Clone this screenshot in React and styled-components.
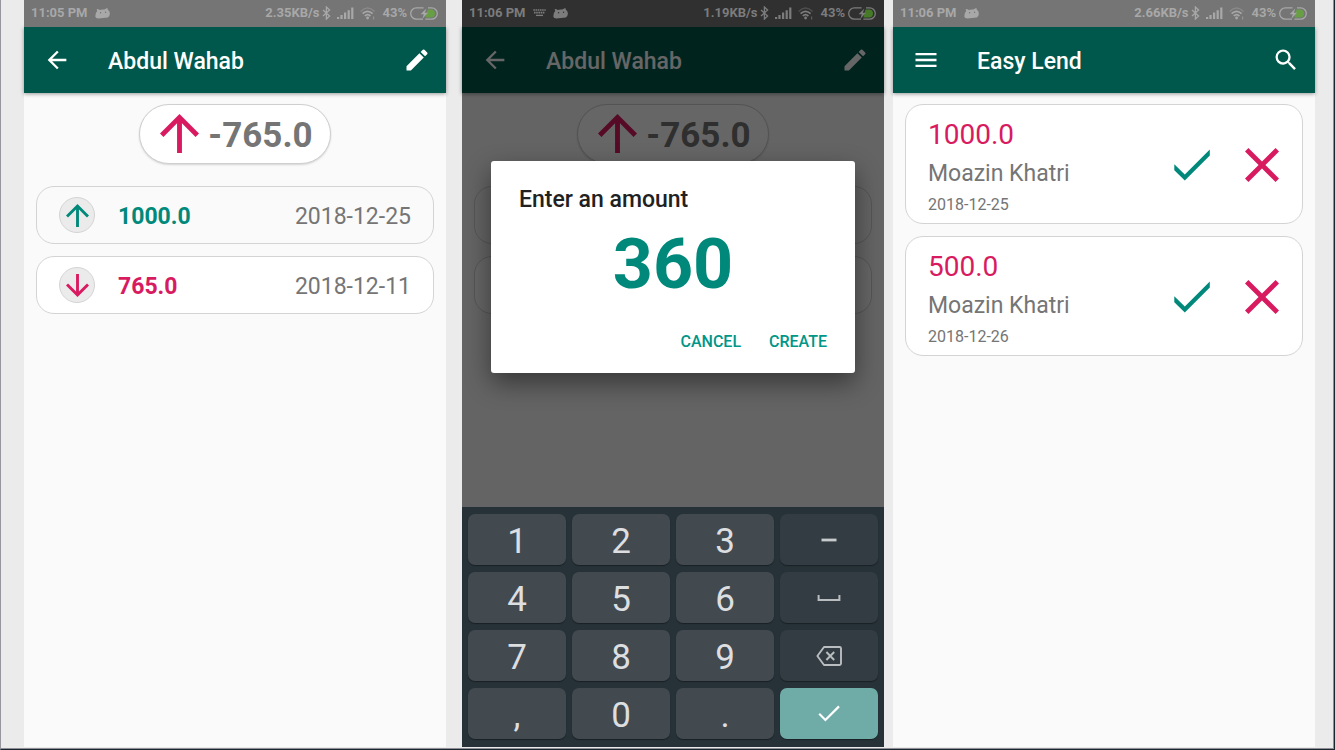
import React from "react";
import styled, { createGlobalStyle, css } from "styled-components";
import { MdArrowBack, MdEdit, MdMenu, MdSearch } from "react-icons/md";

const TEAL = "#00897b";
const PINK = "#d81b60";

const GlobalStyle = createGlobalStyle`
  *, *::before, *::after { box-sizing: border-box; }
  body {
    margin: 0;
    background: #ebebeb;
    font-family: Roboto, "Noto Sans", sans-serif;
    color: #757575;
  }
  h1, h2, p, ul { margin: 0; padding: 0; }
  ul { list-style: none; }
  button { font: inherit; margin: 0; padding: 0; border: 0; background: none; cursor: pointer; }
  svg { display: block; }
`;

const Board = styled.main`
  display: flex;
  min-height: 100vh;
  padding: 0 19px 1px 23px;
  background: #ebebeb;
  border-left: 1px solid #97959d;
  border-right: 1px solid #1b262e;
  border-bottom: 1px solid #1b262e;
  box-shadow: inset -1px -1px 0 #8f8d95;
`;

const Phone = styled.section`
  flex: 1 1 0;
  min-width: 0;
  display: flex;
  flex-direction: column;
  margin-left: ${(p) => p.$gap || 0}px;
  margin-bottom: 1px;
  background: #fafafa;
`;

const Stage = styled.div`
  position: relative;
  flex: 1;
  display: flex;
  flex-direction: column;
`;

const StatusBar = styled.div`
  position: relative;
  z-index: 2;
  display: flex;
  align-items: center;
  justify-content: space-between;
  height: 27px;
  padding: 0 8px 1px 7px;
  font-size: 13px;
  line-height: 16px;
  font-weight: 700;
  white-space: nowrap;
  background: ${(p) => (p.$dim ? "#303030" : "#757575")};
  color: ${(p) => (p.$dim ? "#7c7c7c" : "#a8a8a8")};
`;

const StatusGroup = styled.div`
  display: flex;
  align-items: center;
  gap: ${(p) => p.$gap}px;
`;

const AppBar = styled.header`
  display: flex;
  align-items: center;
  height: 66px;
  padding: 0 15px 0 19px;
  background: #00574b;
  color: #fff;
  box-shadow: 0 1px 4px rgba(0, 0, 0, 0.4);
`;

const AppTitle = styled.h1`
  flex: 1;
  margin-left: 37px;
  padding-top: 4px;
  font-size: 23px;
  line-height: 28px;
  font-weight: 500;
`;

const IconButton = styled.button`
  display: flex;
  color: inherit;
`;

const Content = styled.div`
  display: flex;
  flex-direction: column;
  align-items: center;
  padding: 11px 12px;
`;

const Balance = styled.div`
  display: flex;
  align-items: center;
  gap: 9px;
  height: 60px;
  padding: 0 17px 1px 20px;
  border: 1px solid #cfcfcf;
  border-radius: 30px;
  background: #fff;
  box-shadow: 0 1px 2px rgba(0, 0, 0, 0.15);
`;

const BalanceValue = styled.strong`
  padding-top: 4px;
  font-size: 35px;
  line-height: 42px;
  font-weight: 700;
`;

const Entries = styled.ul`
  display: flex;
  flex-direction: column;
  gap: 12px;
  width: 100%;
  margin-top: ${(p) => p.$top || 0}px;
`;

const surface = css`
  display: flex;
  align-items: center;
  border: 1px solid #d4d4d4;
  border-radius: 18px;
`;

const Entry = styled.li`
  ${surface}
  height: 58px;
  padding: 0 22px;
  background: ${(p) => (p.$plain ? "#fafafa" : "#fff")};

  & > * {
    visibility: ${(p) => (p.$covered ? "hidden" : "visible")};
  }
`;

const Badge = styled.span`
  display: flex;
  align-items: center;
  justify-content: center;
  width: 36px;
  height: 36px;
  border: 1px solid #d4d4d4;
  border-radius: 50%;
  background: #ebebeb;
`;

const entryText = css`
  padding-top: 4px;
  font-size: 23px;
  line-height: 28px;
`;

const EntryAmount = styled.strong`
  ${entryText}
  flex: 1;
  margin-left: 23px;
  font-weight: 700;
  color: ${(p) => p.$color};
`;

const EntryDate = styled.time`
  ${entryText}
`;

const Scrim = styled.div`
  position: absolute;
  inset: 0;
  z-index: 1;
  display: flex;
  align-items: center;
  padding: 27px 29px 0;
  background: rgba(0, 0, 0, 0.6);
`;

const Dialog = styled.form`
  display: flex;
  flex-direction: column;
  flex: 1;
  min-width: 0;
  padding: 25px 28px 17px;
  border-radius: 3px;
  background: #fff;
  box-shadow: 0 10px 26px rgba(0, 0, 0, 0.45);
`;

const DialogTitle = styled.label`
  font-size: 23px;
  line-height: 28px;
  font-weight: 500;
  color: #212121;
`;

const AmountInput = styled.input`
  width: 100%;
  height: 84px;
  margin: 8px 0 22px;
  padding: 0;
  border: 0;
  outline: 0;
  background: none;
  font-family: inherit;
  font-size: 70px;
  line-height: 84px;
  font-weight: 700;
  text-align: center;
  color: ${TEAL};
`;

const DialogActions = styled.div`
  display: flex;
  justify-content: flex-end;
  gap: 28px;
`;

const TextButton = styled.button`
  && {
    font-size: 16px;
    line-height: 28px;
    font-weight: 500;
  }
  color: #009688;
`;

const Keyboard = styled.div`
  display: grid;
  grid-template-columns: repeat(4, 1fr);
  gap: 7px 6px;
  padding: 7px 6px 8px;
  background: #263238;
`;

const keyColors = {
  digit: "#424a50",
  side: "#323c42",
  enter: "#6faca8",
};

const Key = styled.button`
  && {
    padding-top: ${(p) => (p.$kind === "digit" ? 4 : 0)}px;
    font-size: 35px;
    line-height: 42px;
    background: ${(p) => keyColors[p.$kind]};
  }
  display: flex;
  align-items: center;
  justify-content: center;
  height: 51px;
  border-radius: 7px;
  color: #dcdee0;
  box-shadow: 0 1px 1px rgba(0, 0, 0, 0.35);
`;

const LoanCard = styled.li`
  ${surface}
  height: 120px;
  padding: 0 23px 0 22px;
  background: #fff;
`;

const LoanInfo = styled.div`
  display: flex;
  flex-direction: column;
  gap: 8px;
  flex: 1;
  min-width: 0;
  padding-top: 4px;
`;

const LoanAmount = styled.p`
  font-size: 28px;
  line-height: 34px;
  color: ${PINK};
`;

const LoanName = styled.p`
  font-size: 23px;
  line-height: 28px;
`;

const LoanDate = styled.time`
  font-size: 16px;
  line-height: 18px;
`;

const LoanActions = styled.div`
  display: flex;
  align-items: center;
  gap: 35px;
  padding-top: 2px;
`;

const ArrowIcon = ({ size, color, down }) => (
  <svg width={size} height={size} viewBox="4 4 16 16" fill={color} aria-hidden="true">
    {down ? (
      <path d="M20 12l-1.41-1.41L13 16.17V4h-2v12.17l-5.58-5.59L4 12l8 8 8-8z" />
    ) : (
      <path d="M4 12l1.41 1.41L11 7.83V20h2V7.83l5.58 5.59L20 12l-8-8-8 8z" />
    )}
  </svg>
);

const AcceptIcon = () => (
  <svg width="36" height="32" viewBox="0 0 36 32" fill={TEAL} aria-hidden="true">
    <path d="M0.3 15.3L10.8 25.6L35.8 0.6V6.6L10.8 31.6L0.3 21.2Z" />
  </svg>
);

const RejectIcon = () => (
  <svg width="34" height="34" viewBox="5 5 14 14" fill={PINK} aria-hidden="true">
    <path d="M19 6.41L17.59 5 12 10.59 6.41 5 5 6.41 10.59 12 5 17.59 6.41 19 12 13.41 17.59 19 19 17.59 13.41 12z" />
  </svg>
);

const AndroidHeadIcon = ({ eyes }) => (
  <svg width="15" height="11" viewBox="0 0 15 11" aria-hidden="true">
    <path
      fill="currentColor"
      d="M1.6 1.2L3 0.9 4.6 2Q7 1.2 9.4 1.6L11.6 0.2 12.8 0.6 12.8 1.8Q14.8 3 14.9 5.6 14.9 8.4 12.8 9.4L3.4 10.6Q0.6 10.6 0.3 8.6 0 5 2.2 3Z"
    />
    <circle cx="5.6" cy="4.8" r="0.7" fill={eyes} />
    <circle cx="10.6" cy="4.2" r="0.7" fill={eyes} />
  </svg>
);

const MiniKeyboardIcon = () => (
  <svg width="13" height="8" viewBox="0 0 13 8" fill="none" stroke="currentColor" aria-hidden="true">
    <path d="M0.3 1H12.7" strokeWidth="1.6" strokeDasharray="1.6 0.6" />
    <path d="M1 3.6H12" strokeWidth="1.6" strokeDasharray="1.6 0.6" />
    <path d="M3 6.4H10" strokeWidth="1.3" />
  </svg>
);

const BluetoothIcon = () => (
  <svg width="9" height="14" viewBox="0 0 9 14" fill="none" stroke="currentColor" strokeWidth="1.3" aria-hidden="true">
    <path d="M1 4L7.6 10 4.4 13V1L7.6 4 1 10" />
  </svg>
);

const SignalIcon = () => (
  <svg width="17" height="12" viewBox="0 0 17 12" fill="currentColor" aria-hidden="true">
    <path d="M0 10h2.2v2H0zM3.4 8h2.2v4H3.4zM7 5.6h2.2V12H7zM10.6 3.2h2.2V12h-2.2zM14.2 0.6h2.2V12h-2.2z" />
  </svg>
);

const WifiIcon = () => (
  <svg width="16" height="13" viewBox="0 0 16 13" fill="none" stroke="currentColor" aria-hidden="true">
    <path d="M0.6 4.4Q7.5 -2.2 14.6 4.4" strokeWidth="1.4" opacity="0.4" />
    <path d="M2.6 6.6Q7.5 2 12.6 6.6" strokeWidth="1.7" />
    <path d="M4.8 9Q7.5 6.4 10.4 9" strokeWidth="1.7" />
    <circle cx="7.6" cy="11" r="1.4" fill="currentColor" stroke="none" />
    <path d="M13.6 9.4V12.6" strokeWidth="1.2" opacity="0.6" />
  </svg>
);

const BatteryIcon = ({ dim }) => (
  <svg width="28" height="13" viewBox="0 0 28 13" fill="none" aria-hidden="true">
    <path
      d="M17.6 2.6H22Q24.8 3 25 6.5 24.8 10 22 10.4H15.4Z"
      fill={dim ? "#467a27" : "#689f45"}
    />
    <path
      d="M13 12.2H6.4A5.7 5.7 0 0 1 6.4 0.8H13.6M18 0.8H21.6A5.7 5.7 0 0 1 21.6 12.2H15.4"
      stroke="currentColor"
      strokeWidth="1.3"
    />
    <path d="M16.4 1.4L10.6 7.2H13.8L12.4 11.8 18 5.8H14.8Z" fill="currentColor" />
  </svg>
);

const SpaceIcon = () => (
  <svg width="24" height="8" viewBox="0 0 24 8" fill="none" stroke="#b9bdc0" strokeWidth="2" aria-hidden="true">
    <path d="M1.6 1V6H22.4V1" />
  </svg>
);

const DashIcon = () => (
  <svg width="16" height="4" viewBox="0 0 16 4" fill="#c8cbcd" aria-hidden="true">
    <path d="M0.5 0.6h15v2.8h-15z" />
  </svg>
);

const BackspaceIcon = () => (
  <svg width="26" height="20" viewBox="0 0 26 20" fill="none" stroke="#b9bdc0" strokeWidth="1.9" aria-hidden="true">
    <path d="M8 1H23.6Q25 1 25 2.4V17.6Q25 19 23.6 19H8L1.4 10Z" strokeLinejoin="round" />
    <path d="M10.4 6L18.2 14M18.2 6L10.4 14" />
  </svg>
);

const EnterIcon = () => (
  <svg width="22" height="17" viewBox="0 0 22 17" fill="none" stroke="#fff" strokeWidth="2.2" aria-hidden="true">
    <path d="M1.2 8.8L7.4 15L21 1.4" />
  </svg>
);

function Status({ time, speed, dim, typing }) {
  return (
    <StatusBar $dim={dim}>
      <StatusGroup $gap={7}>
        <span>{time}</span>
        {typing && <MiniKeyboardIcon />}
        <AndroidHeadIcon eyes={dim ? "#303030" : "#757575"} />
      </StatusGroup>
      <StatusGroup $gap={6}>
        <StatusGroup $gap={3}>
          <span>{speed}</span>
          <BluetoothIcon />
        </StatusGroup>
        <SignalIcon />
        <WifiIcon />
        <StatusGroup $gap={3}>
          <span>43%</span>
          <BatteryIcon dim={dim} />
        </StatusGroup>
      </StatusGroup>
    </StatusBar>
  );
}

const entries = [
  { amount: "1000.0", date: "2018-12-25", color: TEAL, plain: true },
  { amount: "765.0", date: "2018-12-11", color: PINK, down: true },
];

function PersonScreen({ covered }) {
  return (
    <>
      <AppBar>
        <IconButton type="button" aria-label="Back">
          <MdArrowBack size={28} />
        </IconButton>
        <AppTitle>Abdul Wahab</AppTitle>
        <IconButton type="button" aria-label="Edit">
          <MdEdit size={28} />
        </IconButton>
      </AppBar>
      <Content>
        <Balance>
          <ArrowIcon size={39} color={PINK} />
          <BalanceValue>-765.0</BalanceValue>
        </Balance>
        <Entries $top={22}>
          {entries.map((entry) => (
            <Entry key={entry.date} $plain={entry.plain} $covered={covered}>
              <Badge>
                <ArrowIcon size={23} color={entry.color} down={entry.down} />
              </Badge>
              <EntryAmount $color={entry.color}>{entry.amount}</EntryAmount>
              <EntryDate>{entry.date}</EntryDate>
            </Entry>
          ))}
        </Entries>
      </Content>
    </>
  );
}

const loans = [
  { amount: "1000.0", name: "Moazin Khatri", date: "2018-12-25" },
  { amount: "500.0", name: "Moazin Khatri", date: "2018-12-26" },
];

const keys = [
  { label: "1" },
  { label: "2" },
  { label: "3" },
  { label: "Dash", kind: "side", icon: <DashIcon /> },
  { label: "4" },
  { label: "5" },
  { label: "6" },
  { label: "Space", kind: "side", icon: <SpaceIcon /> },
  { label: "7" },
  { label: "8" },
  { label: "9" },
  { label: "Backspace", kind: "side", icon: <BackspaceIcon /> },
  { label: "," },
  { label: "0" },
  { label: "." },
  { label: "Done", kind: "enter", icon: <EnterIcon /> },
];

export default function App() {
  return (
    <>
      <GlobalStyle />
      <Board>
        <Phone>
          <Status time="11:05 PM" speed="2.35KB/s" />
          <PersonScreen />
        </Phone>

        <Phone $gap={16}>
          <Stage>
            <Status time="11:06 PM" speed="1.19KB/s" dim typing />
            <PersonScreen covered />
            <Scrim>
              <Dialog onSubmit={(e) => e.preventDefault()}>
                <DialogTitle htmlFor="amount">Enter an amount</DialogTitle>
                <AmountInput id="amount" inputMode="decimal" defaultValue="360" />
                <DialogActions>
                  <TextButton type="button">CANCEL</TextButton>
                  <TextButton type="submit">CREATE</TextButton>
                </DialogActions>
              </Dialog>
            </Scrim>
          </Stage>
          <Keyboard>
            {keys.map(({ label, kind = "digit", icon }) => (
              <Key key={label} type="button" $kind={kind} aria-label={icon ? label : undefined}>
                {icon || label}
              </Key>
            ))}
          </Keyboard>
        </Phone>

        <Phone $gap={9}>
          <Status time="11:06 PM" speed="2.66KB/s" />
          <AppBar>
            <IconButton type="button" aria-label="Menu">
              <MdMenu size={28} />
            </IconButton>
            <AppTitle>Easy Lend</AppTitle>
            <IconButton type="button" aria-label="Search">
              <MdSearch size={28} />
            </IconButton>
          </AppBar>
          <Content>
            <Entries>
              {loans.map((loan) => (
                <LoanCard key={loan.date}>
                  <LoanInfo>
                    <LoanAmount>{loan.amount}</LoanAmount>
                    <LoanName>{loan.name}</LoanName>
                    <LoanDate>{loan.date}</LoanDate>
                  </LoanInfo>
                  <LoanActions>
                    <IconButton type="button" aria-label="Accept">
                      <AcceptIcon />
                    </IconButton>
                    <IconButton type="button" aria-label="Reject">
                      <RejectIcon />
                    </IconButton>
                  </LoanActions>
                </LoanCard>
              ))}
            </Entries>
          </Content>
        </Phone>
      </Board>
    </>
  );
}
